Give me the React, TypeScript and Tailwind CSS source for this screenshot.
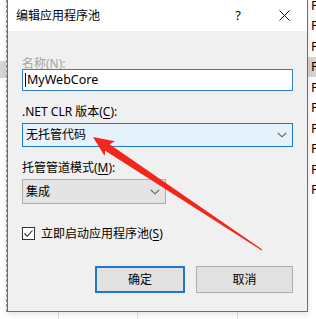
import React from "react";

const font = "font-['Noto_Sans','Noto_Sans_CJK_SC',sans-serif]";

function Chevron() {
  return (
    <svg width="10" height="6" viewBox="0 0 10 6" className="shrink-0">
      <path d="M0.8 0.8 L5 4.8 L9.2 0.8" fill="none" stroke="#5a5a5a" strokeWidth="1.1" />
    </svg>
  );
}

function Acc({ children }: { children: React.ReactNode }) {
  return <span className="underline underline-offset-[2px] decoration-[1px]">{children}</span>;
}

export default function App() {
  const pRows = Array.from({ length: 10 });
  return (
    <div className={`relative w-[316px] h-[319px] overflow-hidden bg-white ${font}`}>
      {/* background window: right list */}
      <div className="absolute left-[308px] top-[-5px] w-[20px] flex flex-col">
        {pRows.map((_, i) => (
          <div
            key={i}
            className={`h-[20.5px] flex items-center pl-[3px] text-[13px] leading-none text-black ${i === 3 ? "bg-[#d4d4d4]" : ""}`}
          >
            P
          </div>
        ))}
      </div>
      {/* background: left strip */}
      <div className="absolute left-0 top-0 w-[7px] h-[312px] border-r border-dashed border-[#9a9a9a]">
        <div className="mt-[61px] h-[17px] bg-[#d6d6d6]" />
      </div>
      {/* background: bottom list columns */}
      <div className="absolute left-0 top-[312px] w-[316px] h-[7px] flex">
        <div className="w-[59px] border-r border-[#e3e3e3]" />
        <div className="w-[79px] border-r border-[#e3e3e3]" />
        <div className="w-[100px] border-r border-[#e3e3e3]" />
      </div>

      {/* dialog */}
      <div className="absolute left-[7px] top-[-1px] w-[301px] h-[313px] border border-[#2e7cc4] bg-[#f0f0f0] flex flex-col shadow-[0_2px_6px_rgba(0,0,0,0.12)]">
        {/* title bar */}
        <div className="h-[31px] bg-white flex items-center shrink-0">
          <div className="pl-[8px] text-[12px] leading-none text-black flex-1">编辑应用程序池</div>
          <div className="w-[46px] h-full flex items-center justify-center text-[13px] text-black">?</div>
          <div className="w-[46px] h-full flex items-center justify-center">
            <svg width="11" height="11" viewBox="0 0 11 11">
              <path d="M0.5 0.5 L10.5 10.5 M10.5 0.5 L0.5 10.5" stroke="#111" strokeWidth="1" />
            </svg>
          </div>
        </div>

        {/* body */}
        <div className="flex flex-col px-[14px] pt-[27px] text-[12px] text-black">
          <div className="h-[12px] leading-[12px] text-[#a3a3a3]">
            名称(<Acc>N</Acc>):
          </div>
          <div className="mt-[-1px] h-[22px] w-[271px] border border-[#2f7fc6] bg-white flex items-center pl-[2px]">
            <div className="w-px h-[14px] bg-black mr-px" />
            <span className="text-[12.5px] leading-none">MyWebCore</span>
          </div>

          <div className="mt-[15px] h-[12px] leading-[12px]">
            .NET CLR 版本(<Acc>C</Acc>):
          </div>
          <div className="mt-[5px] h-[24px] w-[271px] border border-[#1f78c8] bg-[#e5f1fb] flex items-center justify-between pl-[3px] pr-[5px]">
            <span className="leading-none">无托管代码</span>
            <Chevron />
          </div>

          <div className="mt-[15px] h-[12px] leading-[12px]">
            托管管道模式(<Acc>M</Acc>):
          </div>
          <div className="mt-[5px] h-[25px] w-[144px] border border-[#adadad] bg-[#e4e4e4] flex items-center justify-between pl-[3px] pr-[5px]">
            <span className="leading-none">集成</span>
            <Chevron />
          </div>

          <div className="mt-[23px] h-[13px] flex items-center gap-[6px]">
            <div className="w-[13px] h-[13px] border border-[#333] bg-white flex items-center justify-center">
              <svg width="11" height="11" viewBox="0 0 11 11">
                <path d="M1.5 5.5 L4.2 8.3 L9.5 2.5" fill="none" stroke="#222" strokeWidth="1.1" />
              </svg>
            </div>
            <span className="leading-none">
              立即启动应用程序池(<Acc>S</Acc>)
            </span>
          </div>

          <div className="mt-[26px] flex justify-end gap-[11px]">
            <div className="w-[90px] h-[27px] border-2 border-[#1f78c8] bg-[#e1e1e1] flex items-center justify-center leading-none">
              确定
            </div>
            <div className="w-[97px] h-[27px] border border-[#adadad] bg-[#e1e1e1] flex items-center justify-center leading-none">
              取消
            </div>
          </div>
        </div>
      </div>

      {/* red annotation arrow */}
      <svg className="absolute left-0 top-0 pointer-events-none" width="316" height="319" viewBox="0 0 316 319">
        <polygon
          points="93,137 115,141.2 109.6,144.3 262.3,249.5 261.7,250.5 105.2,150.7 104.6,156"
          fill="#f3261c"
        />
      </svg>
    </div>
  );
}
